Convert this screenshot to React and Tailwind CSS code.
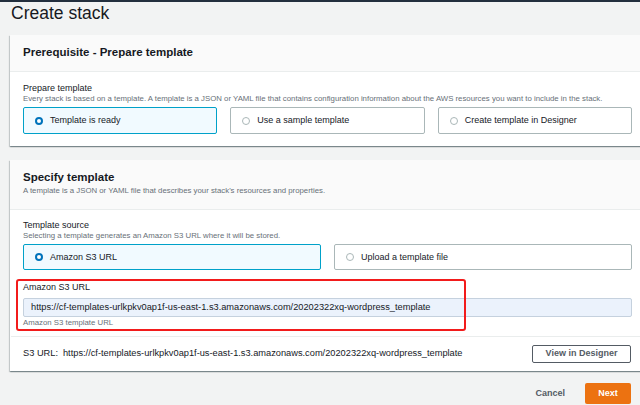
import React from "react";

const URL = "https://cf-templates-urlkpkv0ap1f-us-east-1.s3.amazonaws.com/20202322xq-wordpress_template";

function Tile({ selected, children }) {
  return (
    <div
      className={
        "flex items-center gap-[7px] pl-[11px] rounded-[2px] border " +
        (selected ? "bg-[#f1faff] border-[#00a1c9]" : "bg-white border-[#aab7b8]")
      }
    >
      {selected ? (
        <div className="w-[8px] h-[8px] rounded-full border-[2.5px] border-[#0073bb] bg-white" />
      ) : (
        <div className="w-[8px] h-[8px] rounded-full border border-[#aab7b8] bg-white" />
      )}
      <span className="text-[9px] text-[#16191f] leading-none">{children}</span>
    </div>
  );
}

const cardShadow =
  "shadow-[0_1px_1px_0_rgba(0,28,36,0.3),1px_1px_1px_0_rgba(0,28,36,0.15),-1px_1px_1px_0_rgba(0,28,36,0.15)]";

export default function App() {
  return (
    <div className="w-[640px] h-[405px] overflow-hidden bg-[#f2f3f3] font-['Liberation_Sans',Arial,sans-serif] text-[#16191f]">
      <div className="h-[2px] bg-[#232f3e]" />
      <div className="mt-[1px] mb-[12px] pl-[11px] h-[20px] leading-[20px] text-[17.5px]">Create stack</div>

      {/* Card 1 */}
      <div className={"ml-[10px] w-[634px] bg-white " + cardShadow}>
        <div className="h-[37px] bg-[#fafafa] border-b border-[#eaeded] pl-[13px] flex items-center text-[11.5px] font-bold">
          Prerequisite - Prepare template
        </div>
        <div className="pl-[13px] pr-[12px] pt-[11px] pb-[12px]">
          <div className="text-[9px] leading-[11px]">Prepare template</div>
          <div className="text-[7.8px] leading-[10px] text-[#687078] whitespace-nowrap">
            Every stack is based on a template. A template is a JSON or YAML file that contains configuration information about the AWS resources you want to include in the stack.
          </div>
          <div className="mt-[3px] grid grid-cols-3 gap-[13px] h-[27px]">
            <Tile selected>Template is ready</Tile>
            <Tile>Use a sample template</Tile>
            <Tile>Create template in Designer</Tile>
          </div>
        </div>
      </div>

      {/* Card 2 */}
      <div className={"mt-[14px] ml-[10px] w-[634px] bg-white " + cardShadow}>
        <div className="h-[50px] bg-[#fafafa] border-b border-[#eaeded] pl-[13px] pt-[10px]">
          <div className="text-[11.5px] leading-[14px] font-bold">Specify template</div>
          <div className="mt-[2px] text-[7.8px] leading-[10px] text-[#687078]">
            A template is a JSON or YAML file that describes your stack's resources and properties.
          </div>
        </div>
        <div className="pl-[13px] pr-[12px] pt-[10px]">
          <div className="text-[9px] leading-[11px]">Template source</div>
          <div className="text-[7.8px] leading-[10px] text-[#687078]">
            Selecting a template generates an Amazon S3 URL where it will be stored.
          </div>
          <div className="mt-[3px] grid grid-cols-2 gap-[13px] h-[26px]">
            <Tile selected>Amazon S3 URL</Tile>
            <Tile>Upload a template file</Tile>
          </div>
          <div className="relative mt-[12px] pb-[8px]">
            <div className="text-[9px] leading-[11px]">Amazon S3 URL</div>
            <div className="mt-[5px] h-[19px] flex items-center pl-[7px] bg-[#ebf2fc] border border-[#c5d1de] rounded-[2px] text-[9.25px]">
              {URL}
            </div>
            <div className="mt-[1px] text-[7.8px] leading-[10px] text-[#687078]">Amazon S3 template URL</div>
            <div className="absolute left-[-7px] top-[-3px] w-[450px] h-[52px] border-2 border-[#f21b1b] rounded-[3px]" />
          </div>
        </div>
        <div className="mx-[1px] border-t border-[#eaeded] h-[35px] pl-[12px] pr-[12px] flex items-center justify-between">
          <div className="text-[9.25px] flex gap-[5px]">
            <span>S3 URL:</span>
            <span>{URL}</span>
          </div>
          <div className="w-[99px] h-[18px] border border-[#545b64] rounded-[2px] bg-white flex items-center justify-center text-[9px] font-bold text-[#545b64]">
            View in Designer
          </div>
        </div>
      </div>

      <div className="mt-[12px] flex justify-end items-center pr-[9px] gap-[20px]">
        <span className="text-[9px] font-bold text-[#545b64]">Cancel</span>
        <div className="w-[46px] h-[21px] bg-[#ec7211] rounded-[2px] flex items-center justify-center text-[9px] font-bold text-white">
          Next
        </div>
      </div>
    </div>
  );
}
